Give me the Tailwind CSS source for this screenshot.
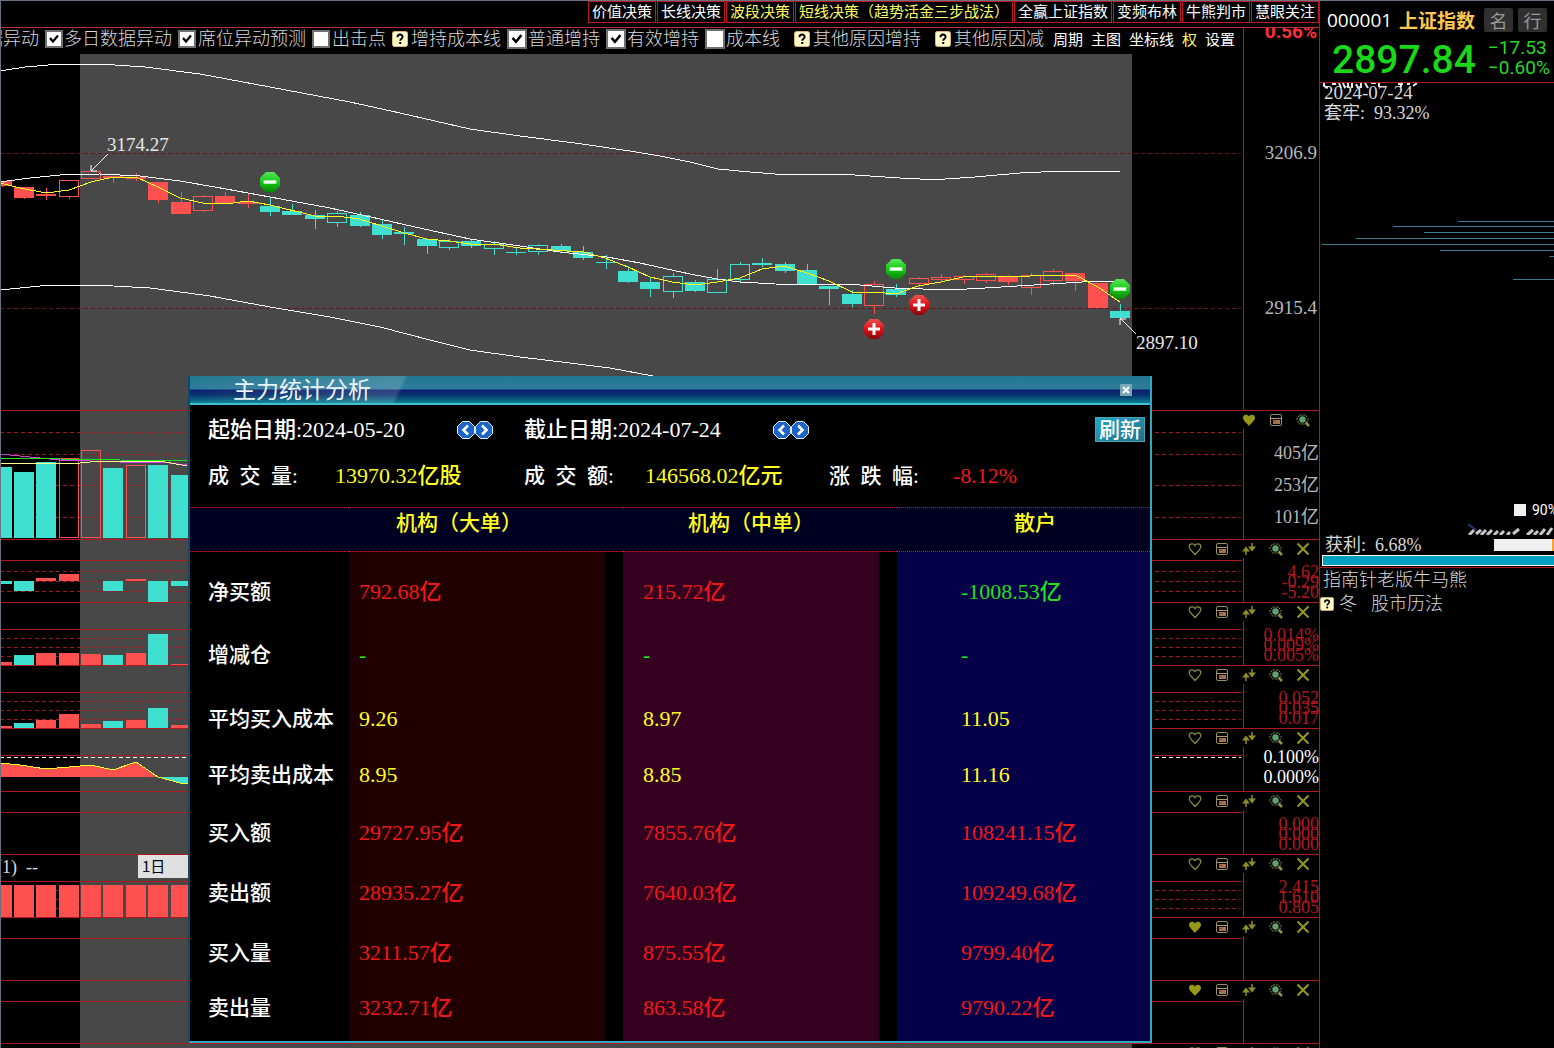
<!DOCTYPE html>
<html lang="zh-CN">
<head>
    <meta charset="UTF-8">
    <meta name="viewport" content="width=device-width, initial-scale=1.0">
    <title>上证指数 - 主力统计分析</title>
    <script src="https://cdn.jsdelivr.net/npm/@tailwindcss/browser@4"></script>
</head>
<body class="bg-black text-[#d8d8d8] font-['Liberation_Serif','Noto_Sans_CJK_SC',serif]">
    <!-- shared icons and gradients -->
    <svg width="0" height="0" class="absolute">
        <linearGradient id="green" x1="0" y1="0" x2="0" y2="1"><stop offset="0" stop-color="#58e858"/><stop offset=".5" stop-color="#18c818"/><stop offset="1" stop-color="#088808"/></linearGradient>
        <linearGradient id="red" x1="0" y1="0" x2="0" y2="1"><stop offset="0" stop-color="#f05050"/><stop offset=".5" stop-color="#e01018"/><stop offset="1" stop-color="#880808"/></linearGradient>
        <symbol id="i-heart" viewBox="0 0 14 14"><path d="M7 12.5C4.5 9.5 1.2 7.5 1.2 4.6 1.2 1.6 5.4.8 7 3.6 8.6.8 12.8 1.6 12.8 4.6 12.8 7.5 9.5 9.5 7 12.5Z" fill="none" stroke="#8c8c40" stroke-width="1.2"/></symbol>
        <symbol id="i-heart-full" viewBox="0 0 14 14"><path d="M7 13C4.5 10 1 7.800 1 4.600 1 1.400 5.400.600 7 3.400 8.600.600 13 1.400 13 4.600 13 7.800 9.500 10 7 13Z" fill="#989818"/></symbol>
        <symbol id="i-calc" viewBox="0 0 14 14"><rect x="1.500" y="1.500" width="11" height="11" rx="1.500" fill="none" stroke="#98905c"/><path d="M1.500 5.500h11" stroke="#a8a068"/><rect x="4" y="7" width="7" height="4" fill="#b07050"/><path d="M4 8.500h3" stroke="#d02828"/><path d="M7 9.500h2" stroke="#20b060"/></symbol>
        <symbol id="i-swap" viewBox="0 0 14 14"><path d="M0 9.500L4 4.500l4 5zM6 4.500h8l-4 5z" fill="#8f8f28"/><path d="M4 9v4M10 1v4" stroke="#8f8f28" stroke-width="1.500"/></symbol>
        <symbol id="i-eye" viewBox="0 0 14 14"><path d="M.600 6.500L3.500 2h6l3 4.500-3 4.500h-6z" fill="none" stroke="#7c9050" stroke-dasharray="2 1"/><circle cx="6.500" cy="6.500" r="3.200" fill="#60a070"/><path d="M9.500 9.500l3.500 3.500" stroke="#909048" stroke-width="2.500"/></symbol>
        <symbol id="i-close" viewBox="0 0 14 14"><path d="M1.500 1.500l11 11M12.500 1.500L1.500 12.500" stroke="#989820" stroke-width="2"/></symbol>
        <symbol id="i-help" viewBox="0 0 16 16"><rect x=".5" y=".5" width="15" height="15" rx="2" fill="#fff8c8" stroke="#d8b870"/><path d="M5.500 6.200C5.500 2.600 10.800 2.800 10.600 6 10.400 7.800 8.200 7.600 8.200 9.800" fill="none" stroke="#000" stroke-width="1.900"/><rect x="7.200" y="11" width="2" height="2"/></symbol>
        <symbol id="i-prev" viewBox="0 0 18 18"><path d="M5.500.5h7l5 5v7l-5 5h-7l-5-5v-7z" fill="#1c64c8" stroke="#e8f4ff"/><path d="M11 4.500L6.500 9l4.500 4.500" fill="none" stroke="#fff" stroke-width="2.500"/></symbol>
        <symbol id="i-next" viewBox="0 0 18 18"><path d="M5.500.5h7l5 5v7l-5 5h-7l-5-5v-7z" fill="#1c64c8" stroke="#e8f4ff"/><path d="M7 4.500l4.500 4.500L7 13.500" fill="none" stroke="#fff" stroke-width="2.500"/></symbol>
        <symbol id="i-tick" viewBox="0 0 18 18"><path d="M5 8l3 3.500 5-6" fill="none" stroke="#000" stroke-width="2.200"/></symbol>
        <symbol id="i-sell" viewBox="0 0 20 20"><path d="M6 0h8l6 6v8l-6 6H6l-6-6V6z" fill="url(#green)"/><rect x="4" y="8.500" width="12" height="3" fill="#fff" stroke="#a8f0a8"/></symbol>
        <symbol id="i-buy" viewBox="0 0 20 20"><path d="M6 0h8l6 6v8l-6 6H6l-6-6V6z" fill="url(#red)"/><path d="M10 4v12M4 10h12" stroke="#fff" stroke-width="3"/></symbol>
    </svg>

    <div class="flex h-screen overflow-hidden border-t border-gray-500">
        <main class="relative flex-1 min-w-0 border-l border-r border-l-gray-500 border-r-[#b01820] overflow-hidden">
            <!-- selected range -->
            <div class="absolute left-[79px] top-[53px] bottom-0 w-[1052px] bg-[#484848]"></div>

            <nav class="relative flex justify-end gap-px h-[27px] bg-black border-b border-[#b83038] text-[15px] leading-[18px] text-white font-['Noto_Sans_CJK_SC',sans-serif]">
                <button class="h-[22px] px-[3px] pb-[3px] border border-[#c01820] whitespace-nowrap">价值决策</button>
                <button class="h-[22px] px-[3px] pb-[3px] border border-[#c01820] whitespace-nowrap">长线决策</button>
                <button class="h-[22px] px-[3px] pb-[3px] border border-[#c01820] whitespace-nowrap text-[#ffff60]">波段决策</button>
                <button class="h-[22px] px-[3px] pb-[3px] border border-[#c01820] whitespace-nowrap text-[#ffff60]">短线决策（趋势活金三步战法）</button>
                <button class="h-[22px] px-[3px] pb-[3px] border border-[#c01820] whitespace-nowrap">全赢上证指数</button>
                <button class="h-[22px] px-[3px] pb-[3px] border border-[#c01820] whitespace-nowrap">变频布林</button>
                <button class="h-[22px] px-[3px] pb-[3px] border border-[#c01820] whitespace-nowrap">牛熊判市</button>
                <button class="h-[22px] px-[3px] pb-[3px] border border-[#c01820] whitespace-nowrap">慧眼关注</button>
            </nav>

            <section class="relative flex h-[382px]">
                <div class="flex-1 min-w-0 border-r border-[#b01820]">
                    <div class="flex h-[26px] pb-1 bg-black">
                        <div class="flex flex-1 min-w-0 items-center gap-1.5 overflow-hidden whitespace-nowrap text-[18px] leading-[22px] font-light">
                            <span class="-ml-4">据异动</span>
                            <label class="flex items-center gap-px"><span class="grid"><input type="checkbox" checked class="col-start-1 row-start-1 appearance-none size-[18px] bg-white border-2 border-[#707070]"><svg class="col-start-1 row-start-1 size-[18px] pointer-events-none"><use href="#i-tick"/></svg></span>多日数据异动</label>
                            <label class="flex items-center gap-0.5"><span class="grid"><input type="checkbox" checked class="col-start-1 row-start-1 appearance-none size-[18px] bg-white border-2 border-[#707070]"><svg class="col-start-1 row-start-1 size-[18px] pointer-events-none"><use href="#i-tick"/></svg></span>席位异动预测</label>
                            <label class="flex items-center gap-0.5"><input type="checkbox" class="appearance-none size-[18px] bg-white border-2 border-[#707070]">出击点</label>
                            <button class="flex items-center gap-[3px]"><svg class="size-4"><use href="#i-help"/></svg>增持成本线</button>
                            <label class="flex items-center gap-px"><span class="grid"><input type="checkbox" checked class="col-start-1 row-start-1 appearance-none size-5 bg-white border-2 border-[#707070]"><svg class="col-start-1 row-start-1 size-5 pointer-events-none"><use href="#i-tick"/></svg></span>普通增持</label>
                            <label class="flex items-center gap-px"><span class="grid"><input type="checkbox" checked class="col-start-1 row-start-1 appearance-none size-5 bg-white border-2 border-[#707070]"><svg class="col-start-1 row-start-1 size-5 pointer-events-none"><use href="#i-tick"/></svg></span>有效增持</label>
                            <label class="flex items-center gap-px"><input type="checkbox" class="appearance-none size-5 bg-white border-2 border-[#707070]">成本线</label>
                            <button class="flex items-center gap-[3px] pl-2"><svg class="size-4"><use href="#i-help"/></svg>其他原因增持</button>
                            <button class="flex items-center gap-[3px] pl-2"><svg class="size-4"><use href="#i-help"/></svg>其他原因减</button>
                        </div>
                        <div class="flex items-center gap-2 pl-2 pr-2 text-[15px] text-white whitespace-nowrap font-['Noto_Sans_CJK_SC',sans-serif]">
                            <button>周期</button><button>主图</button><button>坐标线</button><button class="text-[#ffff60]">权</button><button>设置</button>
                        </div>
                    </div>
                    <svg class="block w-full h-[356px]" shape-rendering="crispEdges"><g id="kline" transform="translate(-1,-54)"></g></svg>
                </div>
                <div class="w-[75px] pr-0.5 text-right text-[19px] leading-6 text-[#b8b8b8]">
                    <div class="flex h-[12px] items-end justify-end overflow-hidden font-['Roboto',sans-serif] font-bold text-[19px] leading-[16px] text-[#ff3038]">0.56%</div>
                    <div class="mt-[101px]">3206.9</div>
                    <div class="mt-[131px]">2915.4</div>
                </div>
            </section>

            <div id="panels" class="relative"></div>

            <!-- statistics dialog -->
            <section class="absolute left-[187px] top-[375px] w-[964px] h-[667px] bg-black border-l-2 border-r-2 border-b-2 border-l-[#0c4a68] border-r-[#30a8c0] border-b-[#30a8c0] text-[21px] leading-6 font-medium text-white">
                <header class="flex items-center justify-between h-[29px] pl-[43px] pr-[18px] border-b-2 border-[#40c0d0] bg-[linear-gradient(115deg,#ffffff00_0%,#ffffff28_22%,#ffffff00_22.5%),linear-gradient(180deg,#207890_0%,#307c9c_48%,#0c1c70_52%,#08306c_70%,#088090_100%)] font-['Noto_Sans_CJK_SC',sans-serif]">
                    <h1 class="pb-1 text-[23px] leading-6 font-normal text-[#e8f4f8]">主力统计分析</h1>
                    <button aria-label="关闭"><svg class="size-3" viewBox="0 0 12 12"><rect width="12" height="12" rx="1" fill="#78a8b8"/><path d="M3 3l6 6M9 3l-6 6" stroke="#fff" stroke-width="2"/></svg></button>
                </header>
                <div class="grid grid-cols-[316px_305px_1fr] pl-[18px] pr-[5px] pt-3 h-[102px] content-start gap-y-[22px]">
                    <div class="flex items-center">
                        <span class="w-[249px] text-[22px]">起始日期:2024-05-20</span>
                        <button aria-label="前一天"><svg class="size-[18px]"><use href="#i-prev"/></svg></button><button aria-label="后一天"><svg class="size-[18px]"><use href="#i-next"/></svg></button>
                    </div>
                    <div class="flex items-center">
                        <span class="w-[249px] text-[22px]">截止日期:2024-07-24</span>
                        <button aria-label="前一天"><svg class="size-[18px]"><use href="#i-prev"/></svg></button><button aria-label="后一天"><svg class="size-[18px]"><use href="#i-next"/></svg></button>
                    </div>
                    <button class="justify-self-end w-[50px] h-[25px] leading-[22px] border border-[#50a0b0] bg-linear-to-br from-[#20a8c8] to-[#207088]">刷新</button>
                    <div class="flex"><span class="w-[127px]">成 &nbsp;交 &nbsp;量:</span><span class="text-[22px] text-[#ffff20]">13970.32亿股</span></div>
                    <div class="flex"><span class="w-[121px]">成 &nbsp;交 &nbsp;额:</span><span class="text-[22px] text-[#ffff20]">146568.02亿元</span></div>
                    <div class="flex"><span class="w-[124px]">涨 &nbsp;跌 &nbsp;幅:</span><span class="text-[22px] text-[#f01818]">-8.12%</span></div>
                </div>
                <table class="w-full table-fixed border-separate border-spacing-0 text-left">
                    <colgroup><col class="w-[159px]"><col class="w-[274px]"><col class="w-[274px]"><col></colgroup>
                    <thead>
                        <tr class="h-[45px] bg-[#000020] text-[#ffff20] align-top">
                            <th class="border-y border-dotted border-[#c02030]"></th>
                            <th class="border-y border-dotted border-[#c02030] pt-[3px] pl-[47px] font-medium">机构（大单）</th>
                            <th class="border-y border-dotted border-[#c02030] pt-[3px] pl-[65px] font-medium">机构（中单）</th>
                            <th class="border-y border-dotted border-[#c02030] pt-[3px] pl-[117px] font-medium">散户</th>
                        </tr>
                    </thead>
                    <tbody id="stats" class="align-top"></tbody>
                </table>
            </section>
        </main>

        <aside class="w-[234px] shrink-0 overflow-hidden">
            <header class="h-[82px] border-b border-[#b01820] pl-[7px] pt-[6px]">
                <div class="flex items-center h-[26px] whitespace-nowrap font-['Noto_Sans_CJK_SC',sans-serif]">
                    <span class="w-[72px] text-[19px] text-white font-['Open_Sans',sans-serif]">000001</span>
                    <span class="w-[85px] text-[19px] font-bold text-[#ffc850]">上证指数</span>
                    <button class="w-[29px] h-6 bg-[#303030] rounded-xs text-lg leading-6 text-[#989898]">名</button>
                    <button class="w-[29px] h-6 ml-[5px] bg-[#303030] rounded-xs text-lg leading-6 text-[#989898]">行</button>
                </div>
                <div class="flex items-center pl-[5px] h-[50px] text-[#18d818] font-['Roboto',sans-serif]">
                    <span class="w-[156px] pt-1 text-[39px] leading-[44px] font-medium">2897.84</span>
                    <span class="text-[19px] leading-5 text-[#28d828]">−17.53<br>−0.60%</span>
                </div>
            </header>
            <div class="relative h-10 pl-1 text-[19px] leading-5">
                <svg class="absolute left-[3px] top-0 w-[100px] h-[6px]"><path d="M1 0v3l4 2M9 1h4M16 0l2 5M20 0l2 5M25 0v5M29 0v5M33 1l2 4M38 0v5M42 0l3 5M48 0h5M56 0v4M75 1h5M78 1v3M84 1h3M90 3l4-3" stroke="#e8e8e8" stroke-width="2" fill="none"/></svg>
                <div>2024-07-24</div>
                <div class="text-[18px]">套牢: &nbsp;93.32%</div>
            </div>
            <svg class="block w-full h-[377px]" shape-rendering="crispEdges">
                <path transform="translate(-1320,-123)" d="M1458 221.500H1554M1393 226.500H1554M1424 232.500H1554M1356 238.500H1554M1322 244.500H1554M1440 250.500H1554M1549 256.500H1554M1513 279.500H1554" stroke="#387c90"/>
            </svg>
            <div class="flex items-center h-5 pl-[194px] gap-1.5 whitespace-nowrap font-['Roboto',sans-serif] text-[14px] text-white"><span class="size-3 shrink-0 bg-[#f0f0f0]"></span>90%</div>
            <svg class="block ml-[148px] w-[86px] h-[15px]"><path d="M0 4l8 6" stroke="#203878" stroke-width="2"/><path d="M1 15l5-5M8 14l5-4M13 15l5-5M19 15l5-5M26 15l4-4M32 15l4-4M39 15l3-3M45 14l6-5M59 15l6-5M66 15l4-4M72 15l5-6M79 15l5-7" stroke="#c8c8c8" stroke-width="3"/></svg>
            <div class="flex items-center justify-between h-5 pl-[5px] text-[18px] leading-5">
                <span>获利: &nbsp;6.68%</span>
                <span class="w-[60px] h-3 bg-[#f0f0f0] border-r-2 border-[#ffa030]"></span>
            </div>
            <div class="ml-0.5 h-[11px] border border-r-0 border-white bg-[#00a0c0]"></div>
            <div class="mt-px border-t border-[#b01820] text-[18px] leading-6 font-light">
                <div class="pl-[3px]">指南针老版牛马熊</div>
                <div class="flex items-center gap-[5px]"><button aria-label="帮助"><svg class="block size-[14px]"><use href="#i-help"/></svg></button>冬<a href="#" class="ml-[9px]">股市历法</a></div>
            </div>
        </aside>
    </div>

    <script>
        const RED = '#ff5050', CYAN = '#40e0d0';
        const STEP = 22.37, X0 = 1.6;

        // type, body top, body bottom, high, low   (R/C solid, r/c hollow)
        const candles = [
            ['R',181,186,181,187],['R',187,198,187,199],['R',194,196,188,200],['r',180,197,180,199],['r',171,179,171,179],
            ['R',176,178,176,183],['R',177,179,173,181],['R',182,200,182,203],['R',202,214,192,214],['r',196,211,195,212],
            ['R',196,203,192,203],['R',202,204,194,208],['C',206,212,198,216],['C',211,215,204,215],['C',215,219,210,229],
            ['c',213,223,211,227],['C',215,226,212,227],['C',224,235,220,239],['C',232,234,227,245],['C',239,246,239,254],
            ['c',241,248,239,250],['C',241,246,239,248],['c',244,249,241,255],['C',252,253,247,255],['c',245,252,244,255],
            ['C',246,251,244,252],['C',252,258,246,260],['C',262,263,255,269],['C',271,282,266,283],['C',282,289,277,297],
            ['c',276,292,273,298],['C',282,291,280,292],['c',279,293,269,293],['c',264,280,262,282],['C',263,265,258,267],
            ['C',264,271,262,273],['C',270,284,264,285],['C',286,289,286,305],['C',294,304,290,307],['r',284,306,281,314],
            ['C',289,295,284,297],['r',278,284,277,289],['r',277,280,274,281],['r',276,280,275,284],['r',274,281,273,283],
            ['R',277,282,275,285],['r',275,288,273,295],['r',271,281,269,286],['R',273,281,273,291],['R',283,308,283,308],
            ['C',311,318,304,318]
        ];

        function bar(i, type, top, bottom) {
            const x = Math.round(X0 + STEP * i) - 10;
            const color = type.toUpperCase() == 'R' ? RED : CYAN;
            if (type == 'R' || type == 'C') {
                return `<rect x="${x}" y="${top}" width="20" height="${bottom - top}" fill="${color}"/>`;
            }
            return `<rect x="${x + 0.5}" y="${top + 0.5}" width="19" height="${bottom - top - 1}" fill="none" stroke="${color}"/>`;
        }

        function line(points, color) {
            return `<polyline points="${points}" fill="none" stroke="${color}"/>`;
        }

        function dash(y, color) {
            return `<line x1="0" x2="1241" y1="${y + 0.5}" y2="${y + 0.5}" stroke="${color}" stroke-dasharray="4 3"/>`;
        }

        let k = dash(153, '#6a1418') + dash(308, '#6a1418');
        candles.forEach(([type, top, bottom, high, low], i) => {
            const x = Math.round(X0 + STEP * i) + 0.5;
            const color = type.toUpperCase() == 'R' ? RED : CYAN;
            k += `<path d="M${x} ${high}V${top}M${x} ${bottom}V${low}" stroke="${color}"/>`;
            k += bar(i, type, top, bottom);
        });
        k += line('0,71 25,67 60,64 100,64 145,67 200,74 270,87 350,102 400,113 470,129 520,136 575,143 630,151 660,156 690,162 718,169 750,172 775,174 840,174 900,178 920,179 945,179 975,177 1020,173 1062,171 1100,171 1120,172', '#fff');
        k += line('0,182 30,178 60,175 100,174 140,176 180,181 215,187 270,197 330,208 380,219 415,227 470,239 520,246 560,252 607,257 640,263 690,274 717,279 740,282 775,284 860,285 895,288 950,290 985,288 1050,284 1098,281 1120,282', '#fff');
        k += line('0,290 50,285 95,285 150,288 180,292 210,296 270,307 330,317 380,327 430,340 470,350 520,357 570,363 610,368 653,376', '#fff');
        k += line('0,183 20,188 46,193 69,190 91,182 113,177 136,177 158,187 180,198 203,203 225,204 248,201 270,205 315,216 337,216 359,219 382,226 404,233 427,239 449,241 470,244 500,245 520,248 583,252 605,258 628,267 650,277 672,282 695,285 717,282 740,278 762,269 784,266 807,273 829,281 852,292 874,292 896,294 918,286 941,282 963,277 985,276 1030,276 1053,275 1075,275 1098,287 1120,302', '#ffff20');
        [['sell',270,182],['sell',896,269],['sell',1120,289],['buy',874,329],['buy',919,305]].forEach(([name, x, y]) => {
            k += `<use href="#i-${name}" x="${x - 10}" y="${y - 10}" width="20" height="20" shape-rendering="auto"/>`;
        });
        k += '<path d="M108 154L91 171M91 165v6h6M1136 334L1120 318M1120 325v-6h6" fill="none" stroke="#fff" shape-rendering="auto"/>';
        k += '<text x="107" y="151" font-size="19" fill="#e8e8e8">3174.27</text><text x="1136" y="349" font-size="19" fill="#e8e8e8">2897.10</text>';
        document.getElementById('kline').innerHTML = k;

        function bars(types, tops, bottoms) {
            return types.split('').map((t, i) => t == ' ' ? '' : bar(i, t, tops[i], Array.isArray(bottoms) ? bottoms[i] : bottoms)).join('');
        }

        function dashes(...ys) {
            return ys.map(y => dash(y, '#a01820')).join('');
        }

        const solid = y => `<line x1="0" x2="100%" y1="${y + 0.5}" y2="${y + 0.5}" stroke="#b01820"/>`;

        // y is the top edge of the panel, drawings use the same coordinates
        const panels = [
            { y: 410, h: 129, full: true, labels: ['405亿', '253亿', '101亿'],
              draw: dashes(432, 454, 485, 517) + bars('CCCrrCrCC', [467,472,462,458,450,468,465,465,475], 538)
                + line('0,454 60,460 120,462 160,462 187,465', '#d040e0') + line('0,463 80,463 100,461 160,461 187,466', '#ffff90') + line('0,458 60,459 120,460 187,461', '#20e020') },
            { y: 539, h: 63, labels: ['4.62', '-0.29', '-5.20'],
              draw: solid(560) + dashes(571, 581, 591) + bars('CCRR CRCC', [581,581,578,574,0,581,579,581,581], [584,591,581,581,0,591,581,602,586]) },
            { y: 602, h: 63, labels: ['0.014%', '0.009%', '0.005%'],
              draw: solid(629) + dashes(638, 647, 656) + bars('RCRRRCRCR', [662,655,653,653,654,655,653,634,664], 665) },
            { y: 665, h: 63, labels: ['0.052', '0.035', '0.017'],
              draw: solid(692) + dashes(701, 710, 719) + bars('RCRRRCRCR', [726,723,720,714,724,721,720,708,725], 728) },
            { y: 728, h: 63, white: true, labels: ['0.100%', '0.000%'],
              draw: solid(755) + dash(757, '#fff') + `<path d="M0 763L20 765 46 769 69 767 91 765 113 770 136 762 158 777H0Z" fill="${RED}"/><path d="M158 777L180 783H190V777Z" fill="${CYAN}"/>`
                + line('0,763 20,765 46,769 69,767 91,765 113,770 136,762 158,777 180,783 190,783', '#ffff20') },
            { y: 791, h: 63, labels: ['0.000', '0.000', '0.000'], draw: solid(812) },
            { y: 854, h: 63, labels: ['2.415', '1.610', '0.805'], period: true,
              draw: solid(881) + dashes(890, 899, 908) + bars('RRRRRRRRR', Array(9).fill(885), 917) },
            { y: 917, h: 63, full: true, labels: [], draw: solid(938) },
            { y: 980, h: 63, full: true, labels: [], draw: solid(1001) },
            { y: 1043, h: 63, labels: [], draw: '' }
        ];

        function iconButton(name, title) {
            return `<button aria-label="${title}"><svg class="block size-[14px]"><use href="#i-${name}"/></svg></button>`;
        }

        document.getElementById('panels').innerHTML = panels.map((p, n) => {
            const icons = iconButton(p.full ? 'heart-full' : 'heart', '收藏') + iconButton('calc', '公式')
                + (n > 0 ? iconButton('swap', '调整') : '') + iconButton('eye', '查看') + (n > 0 ? iconButton('close', '关闭') : '');
            const size = n == 0 ? 'pb-1.5 text-[18px] leading-8 text-[#b8b8b8]' : p.white ? 'pb-1 text-[18px] leading-5 text-white' : 'pb-[5px] text-[18px] leading-[10px] text-[#b01820]';
            const period = p.period ? `<span class="w-[137px] -ml-[5px] mr-[5px] text-[18px] leading-6">(1) &nbsp;--</span>
                <select aria-label="周期" class="appearance-none w-[80px] h-[23px] pl-1 bg-[#e0e0e0] text-black text-[15px] font-['Noto_Sans_CJK_SC',sans-serif]"><option>1日</option></select>` : '';
            return `<div class="flex flex-col border-t border-[#b01820]" style="height:${p.h}px">
                <div class="flex items-start h-[18px]">${period}<div class="flex gap-[13px] ml-auto pr-[9px] pt-0.5">${icons}</div></div>
                <div class="flex flex-1 min-h-0">
                    <svg class="block flex-1 min-w-0 h-full border-r border-[#b01820]" shape-rendering="crispEdges"><g transform="translate(-1,${-p.y - 19})">${p.draw}</g></svg>
                    <div class="flex flex-col justify-end w-[75px] text-right ${size}">${p.labels.map(l => `<span>${l}</span>`).join('')}</div>
                </div>
            </div>`;
        }).join('');

        // label, three values, row height, text colour
        const rows = [
            ['净买额', '792.68亿', '215.72亿', '-1008.53亿', 63, 'red'],
            ['增减仓', '-', '-', '-', 64, 'green'],
            ['平均买入成本', '9.26', '8.97', '11.05', 56, 'yellow'],
            ['平均卖出成本', '8.95', '8.85', '11.16', 58, 'yellow'],
            ['买入额', '29727.95亿', '7855.76亿', '108241.15亿', 60, 'red'],
            ['卖出额', '28935.27亿', '7640.03亿', '109249.68亿', 60, 'red'],
            ['买入量', '3211.57亿', '875.55亿', '9799.40亿', 55, 'red'],
            ['卖出量', '3232.71亿', '863.58亿', '9790.22亿', 73, 'red']
        ];
        const colors = { red: 'text-[#f01818]', green: 'text-[#20e020]', yellow: 'text-[#ffff20]' };

        document.getElementById('stats').innerHTML = rows.map(([label, big, mid, small, h, color]) => {
            const last = small.startsWith('-') ? 'text-[#20e020]' : colors[color];
            return `<tr class="text-[22px]" style="height:${h}px">
                <th class="pl-[18px] pt-7 text-[21px] font-medium whitespace-nowrap">${label}</th>
                <td class="pl-2.5 pt-7 bg-[#200000] border-r-[18px] border-black ${colors[color]}">${big}</td>
                <td class="pl-5 pt-7 bg-[#350020] border-r-[18px] border-black ${colors[color]}">${mid}</td>
                <td class="pl-16 pt-7 bg-[#060048] ${last}">${small}</td>
            </tr>`;
        }).join('');
    </script>
</body>
</html>
